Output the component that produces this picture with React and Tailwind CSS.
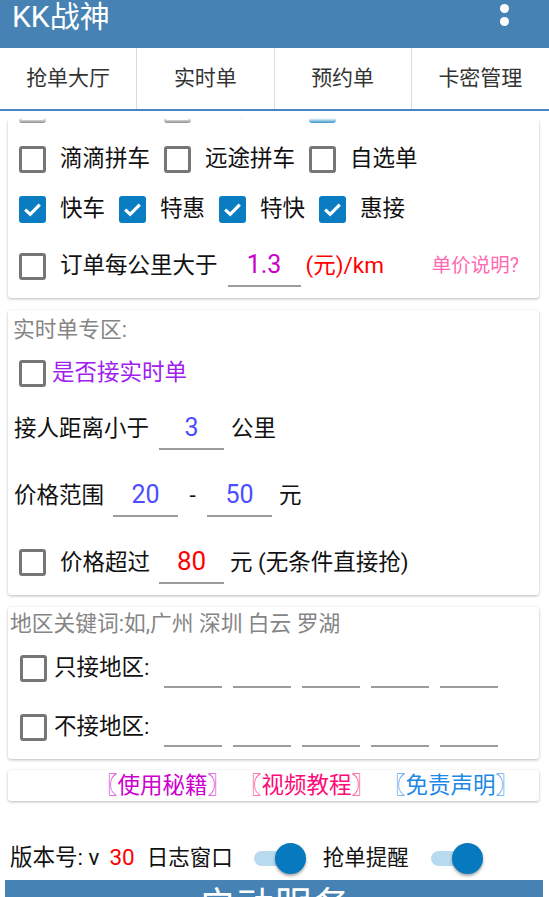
import React from 'react';

function Box({ checked }) {
  if (checked) {
    return (
      <span className="w-[27px] h-[27px] rounded-[3px] bg-[#0a7cc1] flex items-center justify-center shrink-0">
        <svg width="21" height="21" viewBox="0 0 21 21">
          <path d="M3.2 10.6 L8.2 15.3 L17.8 5.6" fill="none" stroke="#fff" strokeWidth="3.2" />
        </svg>
      </span>
    );
  }
  return <span className="w-[27px] h-[27px] rounded-[3px] border-[3px] border-[#767676] shrink-0" />;
}

function Field({ value, color, w = 'w-[65px]', size = 'text-[25px]' }) {
  return (
    <span className={'h-[42px] flex items-center justify-center border-b-2 border-[#9c9c9c] shrink-0 ' + w + ' ' + size + ' ' + color}>
      {value}
    </span>
  );
}

function Toggle() {
  return (
    <span className="relative w-[52px] h-[32px] flex items-center shrink-0">
      <span className="absolute left-0 w-[48px] h-[15px] rounded-full bg-[#b8daef]" />
      <span className="absolute right-0 w-[31px] h-[31px] rounded-full bg-[#0679bf] shadow-[0_2px_3px_rgba(0,0,0,0.35)]" />
    </span>
  );
}

const card = 'ml-[8px] mr-[10px] bg-white rounded-[3px] shadow-[0_1px_3px_rgba(0,0,0,0.28)]';

export default function App() {
  const tabs = ['抢单大厅', '实时单', '预约单', '卡密管理'];

  return (
    <div className="w-[549px] h-[897px] overflow-hidden bg-white text-[#111] font-[Roboto,'Noto_Sans_CJK_SC',sans-serif]">
      <header className="h-[48px] bg-[#4682b4] flex items-start justify-between pl-[12px] pr-[40px]">
        <span className="mt-[2px] text-[30px] leading-[30px] text-white">KK战神</span>
        <span className="mt-[4px] flex flex-col gap-[4px]">
          <span className="w-[9px] h-[9px] rounded-full bg-white" />
          <span className="w-[9px] h-[9px] rounded-full bg-white" />
        </span>
      </header>

      <nav className="h-[63px] grid grid-cols-4 divide-x divide-[#dcdcdc] border-b-2 border-[#4a87c1] relative z-10 bg-white">
        {tabs.map((t) => (
          <div key={t} className="flex items-center justify-center text-[21px] text-[#333]">{t}</div>
        ))}
      </nav>

      <div className="relative overflow-hidden">
        {/* scroll view fading edge */}
        <div className="absolute top-0 left-0 right-0 h-[13px] z-10 bg-linear-to-b from-white from-55% to-white/0" />

        <div className={card + ' -mt-[27px] text-[22.5px]'}>
          <div className="h-[50px] flex items-center pl-[11px]">
            <Box /><span className="ml-[14px] mr-[14px]">顺风拼车</span>
            <Box /><span className="ml-[14px] mr-[14px]">城际拼车</span>
            <Box checked /><span className="ml-[14px] mr-[14px]">第三方单</span>
          </div>
          <div className="h-[50px] flex items-center pl-[11px]">
            <Box /><span className="ml-[14px] mr-[14px]">滴滴拼车</span>
            <Box /><span className="ml-[14px] mr-[14px]">远途拼车</span>
            <Box /><span className="ml-[14px] mr-[14px]">自选单</span>
          </div>
          <div className="h-[50px] flex items-center pl-[11px]">
            <Box checked /><span className="ml-[14px] mr-[14px]">快车</span>
            <Box checked /><span className="ml-[14px] mr-[14px]">特惠</span>
            <Box checked /><span className="ml-[14px] mr-[14px]">特快</span>
            <Box checked /><span className="ml-[14px] mr-[14px]">惠接</span>
          </div>
          <div className="h-[64px] flex items-center pl-[11px]">
            <Box /><span className="ml-[14px]">订单每公里大于</span>
            <span className="ml-[10px]"><Field value="1.3" color="text-[#cc00cc]" w="w-[73px]" /></span>
            <span className="ml-[5px] text-[#ff0000]">(元)/km</span>
            <span className="ml-auto mr-[20px] text-[19.5px] text-[#ff69b4]">单价说明?</span>
          </div>
        </div>

        <div className={card + ' mt-[12px] text-[22.5px]'}>
          <div className="h-[40px] flex items-center pl-[5px] text-[21.75px] text-[#858585]">实时单专区:</div>
          <div className="h-[46px] flex items-center pl-[11px]">
            <Box /><span className="ml-[6px] text-[#a020f0]">是否接实时单</span>
          </div>
          <div className="h-[66px] flex items-center pl-[6px]">
            <span>接人距离小于</span>
            <span className="ml-[10px]"><Field value="3" color="text-[#4d4dff]" /></span>
            <span className="ml-[7px]">公里</span>
          </div>
          <div className="h-[68px] flex items-center pl-[6px]">
            <span>价格范围</span>
            <span className="ml-[9px]"><Field value="20" color="text-[#4d4dff]" /></span>
            <span className="w-[29px] text-center">-</span>
            <Field value="50" color="text-[#4d4dff]" />
            <span className="ml-[7px]">元</span>
          </div>
          <div className="h-[65px] flex items-center pl-[11px]">
            <Box /><span className="ml-[14px]">价格超过</span>
            <span className="ml-[9px]"><Field value="80" color="text-[#ff0000]" size="text-[26px]" /></span>
            <span className="ml-[6px]">元 (无条件直接抢)</span>
          </div>
        </div>

        <div className={card + ' mt-[12px] text-[22.5px]'}>
          <div className="h-[34px] flex items-center pl-[2px] text-[21.75px] text-[#858585]">地区关键词:如,广州 深圳 白云 罗湖</div>
          {['只接地区:', '不接地区:'].map((label, i) => (
            <div key={label} className={(i === 0 ? 'h-[54px]' : 'h-[64px]') + ' flex items-center pl-[12px]'}>
              <Box /><span className="ml-[7px]">{label}</span>
              <span className="ml-[15px] flex gap-[11px]">
                {[0, 1, 2, 3, 4].map((k) => (
                  <span key={k} className="w-[58px] h-[40px] border-b-2 border-[#9c9c9c]" />
                ))}
              </span>
            </div>
          ))}
        </div>

        <div className={card + ' mt-[11px] h-[31px] flex items-center justify-end gap-[9px] pr-[21px] text-[22.5px] leading-none'}>
          <span className="text-[#cc00cc]">〖使用秘籍〗</span>
          <span className="text-[#ff0a78]">〖视频教程〗</span>
          <span className="text-[#1e88e5]">〖免责声明〗</span>
        </div>

        <div className="mt-[40px] h-[34px] flex items-center pl-[10px] text-[22.5px]">
          <span>版本号: v</span>
          <span className="ml-[10px] text-[#ff0000]">30</span>
          <span className="ml-[12px] text-[21.5px]">日志窗口</span>
          <span className="ml-[21px]"><Toggle /></span>
          <span className="ml-[17px] text-[21.5px]">抢单提醒</span>
          <span className="ml-[22px]"><Toggle /></span>
        </div>

        <div className="mt-[5px] ml-[5px] mr-[6px] h-[60px] bg-[#4682b4] flex justify-center pt-[7px] text-[38px] leading-none text-white">
          启动服务
        </div>
      </div>
    </div>
  );
}
